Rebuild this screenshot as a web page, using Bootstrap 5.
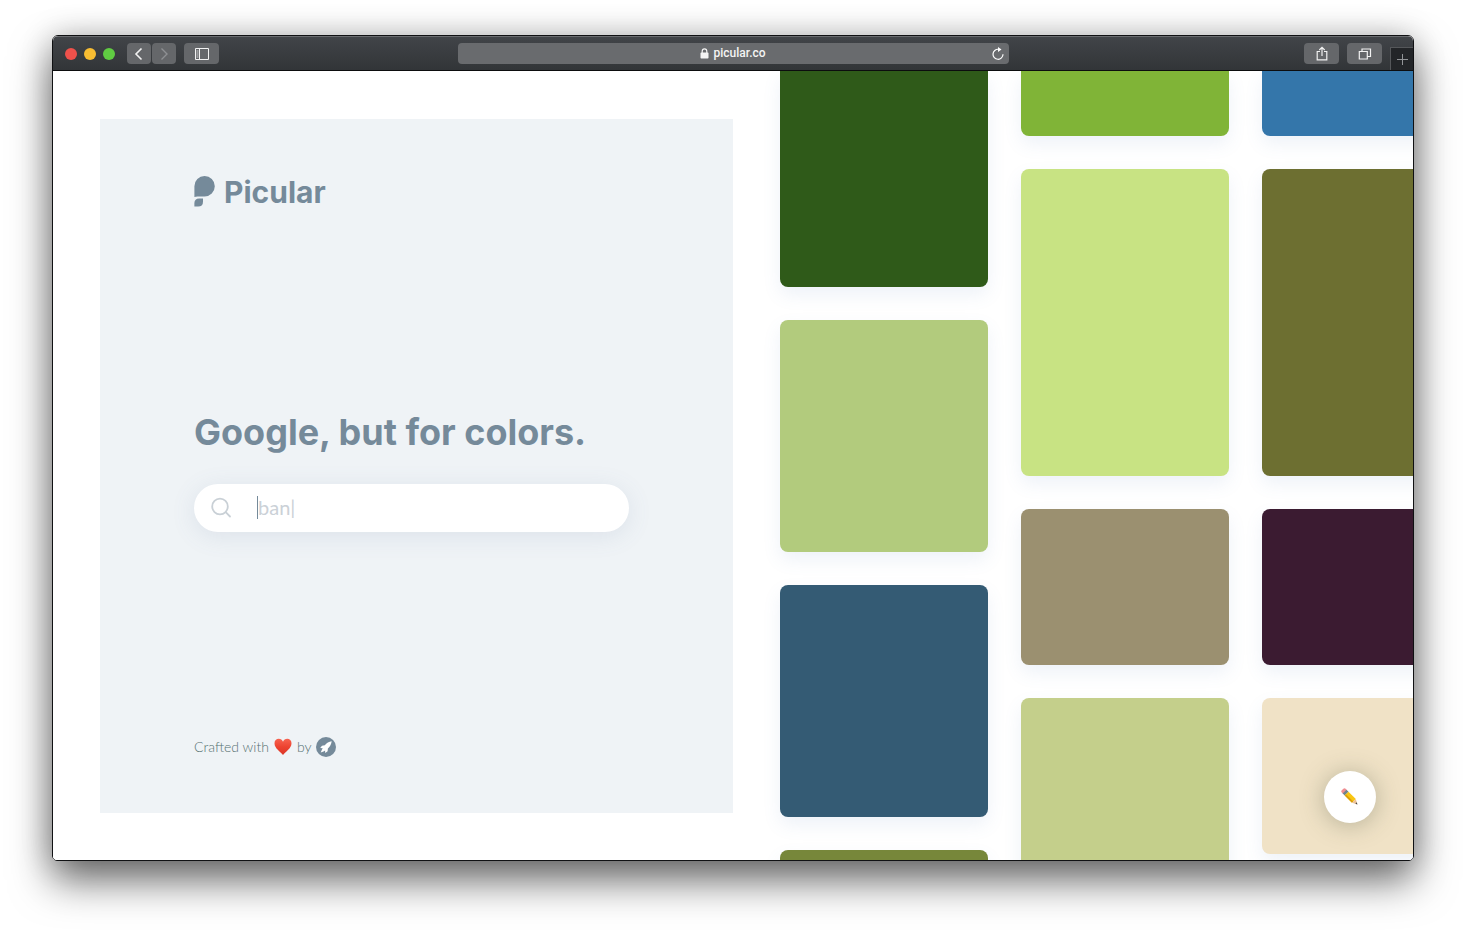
<!DOCTYPE html>
<html lang="en">
<head>
<meta charset="utf-8">
<meta name="viewport" content="width=device-width, initial-scale=1">
<title>Picular</title>
<link href="https://cdn.jsdelivr.net/npm/bootstrap@5.3.0/dist/css/bootstrap.min.css" rel="stylesheet">
<style>
  :root { --slate: #758a9a; --panel: #eff3f6; }
  body { height: 100vh; min-height: 600px; padding: 35px 52px 69px; background: #fff; font-family: "Inter", "Liberation Sans", sans-serif; }
  svg { display: block; flex-shrink: 0; }
  .browser { border: 1px solid #101113; border-radius: 6px 6px 5px 5px;
    box-shadow: 0 20px 40px rgba(0,0,0,.56), 0 0 32px rgba(0,0,0,.2); }
  .browser-clip { border-radius: 5px 5px 4px 4px; }
  .toolbar { height: 35px; background: linear-gradient(#414448, #323538); border-top: 1px solid #6a6c6f; border-bottom: 1px solid #0c0d0e; }
  .toolbar-side { flex: 1 1 0; }
  .lights { gap: 7px; margin: 0 12px; }
  .light { width: 12px; height: 12px; border: 0; padding: 0; border-radius: 50%; }
  .history { gap: 1px; }
  .tool { height: 21px; width: 35px; border: 0; border-radius: 4px; padding: 0; background: #65676a; color: #f2f2f2; display: flex; align-items: center; justify-content: center; }
  .tool-nav { width: 24px; }
  .address { width: 551px; height: 21px; border-radius: 4px; background: #696b6e; color: #f4f4f4; font-family: "Roboto", sans-serif; font-size: 12px; line-height: 21px; font-weight: 500; padding: 0 4px; }
  .address-spacer { width: 14px; }
  .new-tab { width: 23px; height: 23px; padding: 0; border: solid #55575a; border-width: 1px 0 0 1px; background: #232528; color: #939598; display: flex; align-items: center; justify-content: center; }
  .intro { padding: 48px 0 47px 47px; }
  .panel { background: var(--panel); color: var(--slate); padding: 57px 94px 54px; }
  .brand { color: var(--slate); font-size: 30px; line-height: 32px; font-weight: 700; gap: 9px; }
  .hero { padding-bottom: 4px; }
  .headline { font-size: 36px; line-height: 48px; font-weight: 700; margin-bottom: 28px; }
  .search { max-width: 435px; height: 48px; border-radius: 24px; background: #fff; padding-left: 16px; box-shadow: 0 4px 24px rgba(95,115,155,.13); }
  .search-field { font-family: "Lato", sans-serif; font-size: 20px; line-height: 24px; padding: 0 0 2px; margin-left: 26px; }
  .search-field::placeholder { color: #cbd1d7; opacity: 1; }
  .search-caret { left: 63px; top: 12px; width: 1px; height: 23px; background: var(--slate); }
  .credit { font-family: "Lato", sans-serif; font-size: 14px; line-height: 24px; font-weight: 300; color: #567272; gap: 5px; }
  .swatches { padding-left: 47px; gap: 33px; }
  .stack { width: 208px; gap: 33px; }
  .swatch { border-radius: 8px; flex-shrink: 0; box-shadow: 0 8px 18px rgba(90,130,190,.1); }
  .swatch-first { border-radius: 0 0 8px 8px; }
  .h-65 { height: 65px; } .h-156 { height: 156px; } .h-216 { height: 216px; } .h-232 { height: 232px; } .h-307 { height: 307px; }
  .edit { right: 37px; bottom: 37px; width: 52px; height: 52px; border-radius: 50%; border: 0; padding: 0; background: #fff; box-shadow: 0 2px 24px rgba(70,80,60,.35); }
</style>
</head>
<body>
<div class="browser h-100">
<div class="browser-clip h-100 d-flex flex-column overflow-hidden bg-white">
  <header class="toolbar d-flex align-items-center flex-shrink-0">
    <div class="toolbar-side d-flex align-items-center">
      <div class="lights d-flex">
        <button class="light" style="background:#ee514b" aria-label="Close"></button>
        <button class="light" style="background:#f8bd32" aria-label="Minimise"></button>
        <button class="light" style="background:#60cc42" aria-label="Full screen"></button>
      </div>
      <div class="history d-flex">
        <button class="tool tool-nav" aria-label="Back"><svg width="10" height="14" viewBox="0 0 10 14" fill="none" stroke="currentColor" stroke-width="1.6"><path d="M7.500 1.500 2 7l5.500 5.500"/></svg></button>
        <button class="tool tool-nav" aria-label="Forward"><svg width="10" height="14" viewBox="0 0 10 14" fill="none" stroke="#8e9093" stroke-width="1.4"><path d="M2.500 1.500 8 7l-5.500 5.500"/></svg></button>
      </div>
      <button class="tool ms-2" aria-label="Sidebar"><svg width="16" height="12" viewBox="0 0 16 12" fill="none" stroke="currentColor"><path d="M1.500.5h13v11h-13zM5.500.5v11"/><path d="M2.500 3h2M2.500 5h2M2.500 7h2M2.500 9h2" stroke-width=".8"/></svg></button>
    </div>
    <div class="address d-flex align-items-center justify-content-between">
      <span class="address-spacer"></span>
      <span class="d-flex align-items-center gap-1"><svg width="9" height="11" viewBox="0 0 9 11"><path d="M2.200 5V3.200a2.300 2.300 0 0 1 4.600 0V5" fill="none" stroke="currentColor" stroke-width="1.2"/><rect x=".5" y="4.600" width="8" height="6" rx=".8" fill="currentColor"/></svg>picular.co</span>
      <button class="btn p-0 border-0 text-white" aria-label="Reload"><svg width="14" height="14" viewBox="0 0 14 14"><path d="M7.500 2.300A5 5 0 1 0 12 7.300" fill="none" stroke="currentColor" stroke-width="1.2"/><path d="M7 0l3.500 2.500L7 5z" fill="currentColor"/></svg></button>
    </div>
    <div class="toolbar-side d-flex align-items-center justify-content-end gap-2 h-100">
      <button class="tool" aria-label="Share"><svg width="14" height="16" viewBox="0 0 14 16" fill="none" stroke="currentColor" stroke-width="1.2"><path d="M5 5.500H2.200v8.300h9.600V5.500H9M7 10V1.500M4.300 4 7 1.300 9.700 4"/></svg></button>
      <button class="tool" aria-label="Tabs"><svg width="14" height="14" viewBox="0 0 14 14" fill="none" stroke="currentColor" stroke-width="1.2"><path d="M1.300 4.500h8v7.500h-8zM4 4.500V2h8.500v7.500H9.500"/></svg></button>
      <button class="new-tab align-self-end" aria-label="New tab"><svg width="11" height="11" viewBox="0 0 11 11" stroke="currentColor"><path d="M5.500 0v11M0 5.500h11"/></svg></button>
    </div>
  </header>

  <div class="row g-0 flex-fill flex-nowrap overflow-hidden position-relative">
    <main class="col-6 intro h-100">
      <div class="panel h-100 d-flex flex-column justify-content-between">
        <a href="#" class="brand d-flex align-items-center text-decoration-none">
          <svg width="21" height="32" viewBox="0 0 21 32" fill="#758a9a"><path d="M.4 21V10.300A10.200 10.200 0 1 1 10.500 20.400C6 20.400 2.500 20.300.4 21z"/><path d="M.4 30.500V27c0-3 1.800-4.600 4.700-4.600H9v3.300c0 3.300-1.900 4.800-4.800 4.800z"/></svg>
          Picular
        </a>
        <section class="hero">
          <h1 class="headline text-nowrap">Google, but for colors.</h1>
          <div class="search d-flex align-items-center position-relative">
            <label for="q" aria-label="Search colors"><svg width="22" height="22" viewBox="0 0 22 22" fill="none" stroke="#c9d0d6" stroke-width="1.8" stroke-linecap="round"><circle cx="10" cy="9.500" r="7.800"/><path d="m15.700 15.200 4.300 4.300"/></svg></label>
            <input id="q" type="text" class="search-field form-control border-0 bg-transparent shadow-none me-4" placeholder="ban|">
            <span class="search-caret position-absolute"></span>
          </div>
        </section>
        <footer class="credit d-flex align-items-center">
          <span>Crafted with</span>
          <svg width="18" height="18" viewBox="0 0 18 18" role="img" aria-label="love"><defs><linearGradient id="heart" x2="0" y2="1"><stop stop-color="#f76350"/><stop offset=".5" stop-color="#ed4330"/><stop offset="1" stop-color="#da3527"/></linearGradient></defs><path fill="url(#heart)" d="M9 17C6.500 13.500.5 10.500.5 5.200.5 2.400 2.400.8 4.700.8 6.700.8 8.300 2 9 3.700 9.700 2 11.300.8 13.300.8c2.300 0 4.200 1.600 4.200 4.400C17.500 10.500 11.500 13.500 9 17z"/></svg>
          <span>by</span>
          <a href="#" aria-label="Studio"><svg width="20" height="20" viewBox="0 0 20 20"><circle cx="10" cy="10" r="10" fill="#758a9a"/><path fill="#fff" d="M15.700 4.300c-2.700.5-5.200 1.700-6.900 4L6 8.700 4.200 11l2.500.2-.8 1.600-1.200 2.700 2.800-1 1.600-1 .1 2.400 2.400-1.700.3-2.800c2.200-1.800 3.400-4.300 3.800-7.100z"/></svg></a>
        </footer>
      </div>
    </main>

    <div class="col-6 swatches d-flex h-100">
      <div class="stack d-flex flex-column flex-shrink-0">
        <div class="swatch swatch-first h-216" style="background:#2f5a19"></div>
        <div class="swatch h-232" style="background:#b2cb7d"></div>
        <div class="swatch h-232" style="background:#345b74"></div>
        <div class="swatch h-232" style="background:#77873a"></div>
      </div>
      <div class="stack d-flex flex-column flex-shrink-0">
        <div class="swatch swatch-first h-65" style="background:#80b437"></div>
        <div class="swatch h-307" style="background:#c8e383"></div>
        <div class="swatch h-156" style="background:#9b9070"></div>
        <div class="swatch h-232" style="background:#c4cf8b"></div>
      </div>
      <div class="stack d-flex flex-column flex-shrink-0">
        <div class="swatch swatch-first h-65" style="background:#3476aa"></div>
        <div class="swatch h-307" style="background:#6d6f31"></div>
        <div class="swatch h-156" style="background:#3b1b31"></div>
        <div class="swatch h-156" style="background:#f0e2c6"></div>
      </div>
    </div>
    <button class="edit position-absolute d-flex align-items-center justify-content-center" aria-label="Edit"><svg width="18" height="18" viewBox="0 0 18 18"><g transform="rotate(45 9 9)"><rect x="-1.500" y="6.300" width="4" height="5.400" rx="1.600" fill="#ef8d92"/><path fill="#70858c" d="M1.300 6.300h2.900v5.400H1.300z"/><path fill="#f9c613" d="M4.200 6.300h10.300v5.400H4.200z"/><path fill="#dc9f08" d="M4.200 9.900h10.300v1.800H4.200z"/><path fill="#ecc298" d="M14.500 6.300 19.500 9l-5 2.700z"/><path fill="#444" d="M17.600 8 19.500 9l-1.900 1z"/></g></svg></button>
  </div>
</div>
</div>
<script src="https://cdn.jsdelivr.net/npm/bootstrap@5.3.0/dist/js/bootstrap.bundle.min.js"></script>
</body>
</html>
